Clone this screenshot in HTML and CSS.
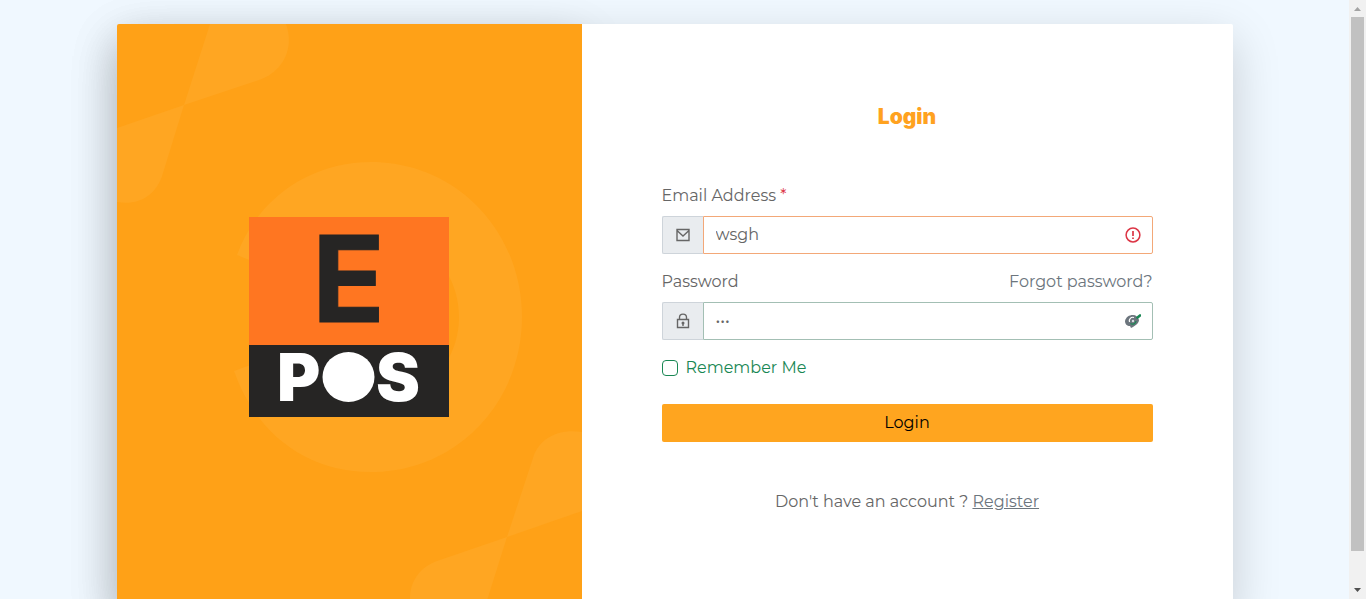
FILE: index.html
```html
<!DOCTYPE html>
<html lang="en">
<head>
<meta charset="utf-8">
<meta name="viewport" content="width=device-width, initial-scale=1">
<title>Login</title>
<link rel="stylesheet" href="styles.css">
</head>
<body>
<main class="card">
  <section class="brand">
    <svg class="brand-pattern" viewBox="0 0 465 586" preserveAspectRatio="xMidYMid slice" aria-hidden="true">
      <path d="M93 0H169C178 25 165 48 142 56L67 81Z"/>
      <path d="M67 81L0 104V178C22 182 40 171 46 149Z"/>
      <path d="M390 513L416 434C422 414 442 404 465 408V487Z"/>
      <path d="M390 513L320 537C300 544 288 564 295 586H367Z"/>
      <path d="M120 231C141 173 195 138 254 138C339 138 405 207 405 293C405 379 339 448 254 448C190 448 139 410 117 347L169 328C180 361 213 382 252 382C302 382 342 342 342 293C342 244 302 204 252 204C216 204 186 223 172 252Z"/>
    </svg>
    <svg class="logo" viewBox="0 0 200 200" role="img" aria-label="E POS">
      <rect width="200" height="200" fill="#ff7621"/>
      <rect y="128" width="200" height="72" fill="#262524"/>
      <text class="logo-e" x="63" y="105">E</text>
      <text class="logo-pos" x="28" y="184">P</text>
      <ellipse cx="99.500" cy="160" rx="26" ry="25" fill="#fff"/>
      <text class="logo-pos" x="127" y="184">S</text>
    </svg>
  </section>
  <section class="panel">
    <h1 class="title">Login</h1>
    <form class="form">
      <div class="field">
        <label for="email">Email Address <span class="required">*</span></label>
        <div class="group">
          <span class="addon"><svg viewBox="0 0 16 16" aria-hidden="true"><path d="M2 2.500H14V13.500H2ZM2 3.500L8 9L14 3.500"/></svg></span>
          <div class="control invalid">
            <input id="email" type="text" value="wsgh">
            <svg class="status" viewBox="0 0 16 16" aria-hidden="true"><circle cx="8" cy="8" r="6.900" fill="none" stroke="#dc3545" stroke-width="1.500"/><path d="M8 4V9M8 10.500V12" stroke="#dc3545" stroke-width="1.700"/></svg>
          </div>
        </div>
      </div>
      <div class="field">
        <div class="label-row"><label for="password">Password</label><a href="#">Forgot password?</a></div>
        <div class="group">
          <span class="addon"><svg viewBox="0 0 16 16" aria-hidden="true"><path d="M2.500 6.500H13.500V14.500H2.500ZM4.500 6.500V4.500C4.500 0 11.500 0 11.500 4.500V6.500M8 10V13"/><circle cx="8" cy="10" r=".8"/></svg></span>
          <div class="control valid">
            <input id="password" type="password" value="abc">
            <svg class="status" viewBox="0 0 16 16" aria-hidden="true"><path d="M0 8C1 4 4 2 8 2C11 2 13 4 14 7C14 10 11 12 8 14L6 15L5 13C2 13 0 11 0 8Z" fill="#6c757d"/><path d="M9 4.500A3.500 3.500 0 0 0 4.500 9" fill="none" stroke="#fff" stroke-width="1.200"/><path d="M5.500 10.500A3.500 3.500 0 0 0 11 8" fill="none" stroke="#198754" stroke-width="1.300"/><path d="M12.500 4.500L15 2.500" fill="none" stroke="#198754" stroke-width="2.600" stroke-linecap="round"/><circle cx="8" cy="8" r="1.200" fill="#d5dce0"/></svg>
          </div>
        </div>
      </div>
      <label class="remember" for="remember"><input id="remember" type="checkbox">Remember Me</label>
      <button class="submit" type="submit">Login</button>
    </form>
    <p class="signup">Don't have an account ? <a href="#">Register</a></p>
  </section>
</main>
<div class="scrollbar" aria-hidden="true">
  <svg viewBox="0 0 17 17"><path d="M5 11H12L8.500 7Z" fill="#a3a3a3"/></svg>
  <div class="track"><div class="thumb"></div></div>
  <svg viewBox="0 0 17 17"><path d="M5 6H12L8.500 10Z" fill="#505050"/></svg>
</div>
</body>
</html>
```

FILE: styles.css
```css
* { box-sizing: border-box; }
html { scrollbar-width: none; background: #f0f8ff; }
body {
  margin: 0;
  padding: 24px 17px 24px 0;
  color: #666;
  font: 400 16px/24px Montserrat, Inter, sans-serif;
}
.card {
  display: grid;
  grid-template-columns: 5fr 7fr;
  width: calc(100% - 24px);
  max-width: 1116px;
  margin: 0 auto;
  border-radius: 2px;
  box-shadow: 0 16px 48px rgba(0, 0, 0, .175);
}
.brand {
  position: relative;
  display: flex;
  align-items: center;
  justify-content: center;
  background: #ffa117;
  border-radius: 2px 0 0 2px;
  box-shadow: 0 16px 48px rgba(0, 0, 0, .175);
}
.brand-pattern {
  position: absolute;
  inset: 0;
  width: 100%;
  height: 100%;
  fill: #ffa622;
}
.logo { position: relative; width: 200px; height: 200px; }
.logo-e { font: 700 120px Inter, sans-serif; fill: #262524; stroke: #262524; }
.logo-pos { font: 900 66px Inter, sans-serif; fill: #fff; }
.panel {
  position: relative;
  padding: 80px 80px 96px;
  background: #fff;
  border-radius: 0 2px 2px 0;
}
.title {
  margin: 0 0 54px;
  color: #ffa21f;
  font: 900 21px/26px Inter, sans-serif;
  text-align: center;
}
.form { display: flex; flex-direction: column; gap: 16px; }
.field { display: flex; flex-direction: column; gap: 8px; }
.label-row { display: flex; justify-content: space-between; }
a { color: #6c757d; }
.label-row a { text-decoration: none; }
.required { color: #dc3545; }
.group { display: flex; height: 38px; }
.addon {
  display: grid;
  place-items: center;
  width: 41px;
  background: #e9ecef;
  border: 1px solid #ced4da;
  border-right: 0;
  border-radius: 2px 0 0 2px;
}
.addon svg { width: 16px; height: 16px; fill: none; stroke: #666; stroke-width: 1.4; }
.control {
  display: flex;
  flex: 1;
  align-items: center;
  padding: 0 11px 0 12px;
  border: 1px solid #f3a878;
  border-radius: 0 2px 2px 0;
}
.control.valid { border-color: #a3bfb4; }
.control input {
  flex: 1;
  min-width: 0;
  padding: 0;
  border: 0;
  outline: 0;
  background: none;
  color: #666;
  font: inherit;
}
.status { width: 16px; height: 16px; }
.remember { display: flex; align-items: center; gap: 8px; color: #198754; }
.remember input {
  appearance: none;
  width: 16px;
  height: 16px;
  margin: 0;
  border: 1px solid #198754;
  border-radius: 4px;
}
.submit {
  height: 38px;
  margin-top: 8px;
  border: 0;
  border-radius: 2px;
  background: #ffa51f;
  color: #000;
  font: inherit;
}
.signup { margin: 48px 0 0; text-align: center; }
.scrollbar {
  position: fixed;
  inset: 0 0 0 auto;
  display: flex;
  flex-direction: column;
  width: 17px;
  background: #f1f1f1;
}
.scrollbar svg { width: 17px; height: 17px; }
.track { flex: 1; padding: 0 2px; }
.thumb { height: 94.5%; background: #c1c1c1; }
```
